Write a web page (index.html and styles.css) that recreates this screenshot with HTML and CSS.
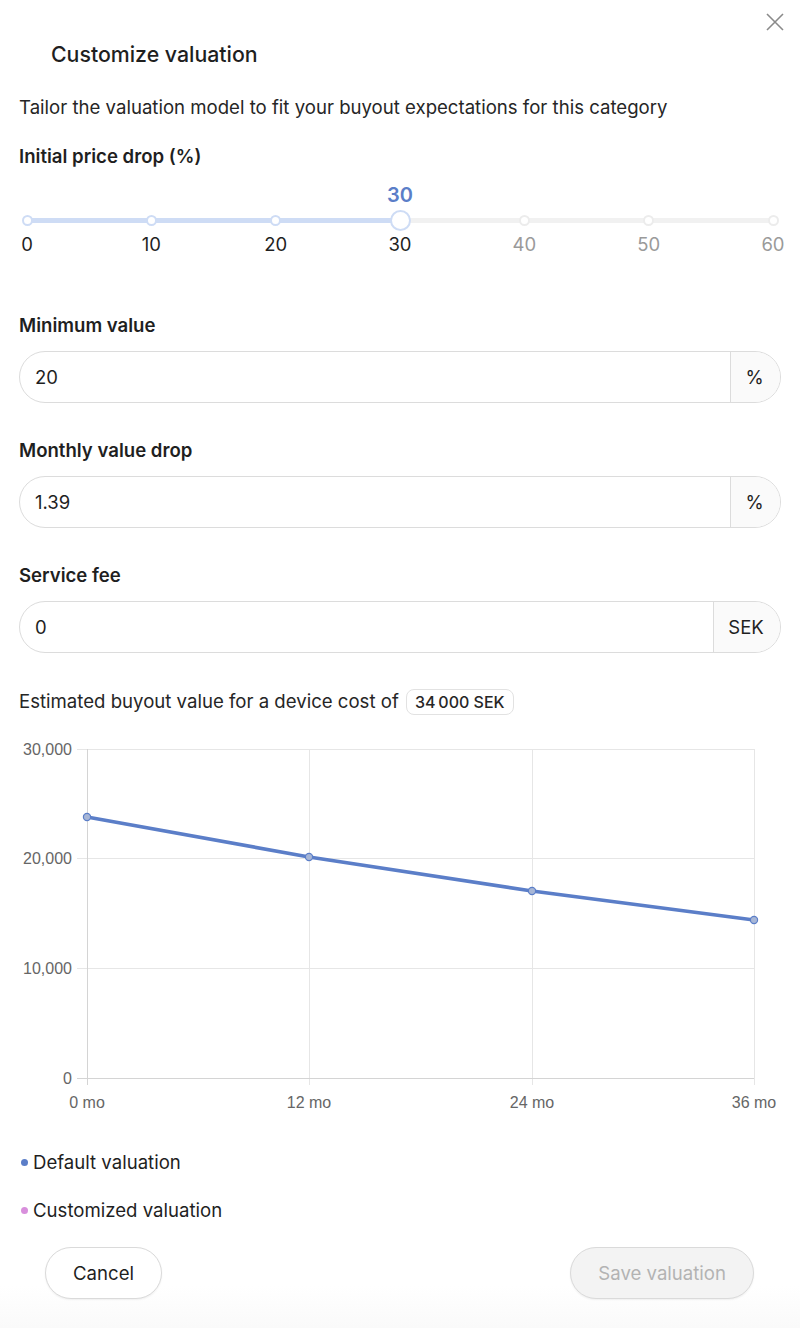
FILE: index.html
```html
<!DOCTYPE html>
<html>
<head>
<meta charset="utf-8">
<link rel="stylesheet" href="styles.css">
</head>
<body>
<div class="modal">
  <button class="close" aria-label="Close">
    <svg width="18" height="18" viewBox="0 0 18 18"><path d="M1 1L17 17M17 1L1 17" stroke="#8a8a8a" stroke-width="1.6" fill="none"/></svg>
  </button>
  <h2 class="title">Customize valuation</h2>
  <p class="desc">Tailor the valuation model to fit your buyout expectations for this category</p>

  <div class="field slider-field">
    <div class="label">Initial price drop (%)</div>
    <div class="slider">
      <div class="slider-value">30</div>
      <div class="track">
        <div class="track-fill"></div>
        <span class="dot active" style="left:0%"></span>
        <span class="dot active" style="left:16.6667%"></span>
        <span class="dot active" style="left:33.3333%"></span>
        <span class="thumb" style="left:50%"></span>
        <span class="dot" style="left:66.6667%"></span>
        <span class="dot" style="left:83.3333%"></span>
        <span class="dot" style="left:100%"></span>
      </div>
      <div class="ticks">
        <span class="tick on">0</span>
        <span class="tick on">10</span>
        <span class="tick on">20</span>
        <span class="tick on">30</span>
        <span class="tick">40</span>
        <span class="tick">50</span>
        <span class="tick">60</span>
      </div>
    </div>
  </div>

  <div class="field first-input">
    <div class="label">Minimum value</div>
    <div class="input">
      <span class="input-value">20</span>
      <span class="suffix">%</span>
    </div>
  </div>

  <div class="field">
    <div class="label">Monthly value drop</div>
    <div class="input">
      <span class="input-value">1.39</span>
      <span class="suffix">%</span>
    </div>
  </div>

  <div class="field">
    <div class="label">Service fee</div>
    <div class="input">
      <span class="input-value">0</span>
      <span class="suffix wide">SEK</span>
    </div>
  </div>

  <div class="estimate">Estimated buyout value for a device cost of <span class="badge">34&#8239;000 SEK</span></div>

  <svg class="chart" width="762" height="385" viewBox="0 0 762 385">
    <g stroke="#e6e6e6" stroke-width="1">
      <line x1="58" y1="14.5" x2="735" y2="14.5"/>
      <line x1="58" y1="123.5" x2="735" y2="123.5"/>
      <line x1="58" y1="233.5" x2="735" y2="233.5"/>
      <line x1="290.5" y1="14" x2="290.5" y2="350"/>
      <line x1="513.5" y1="14" x2="513.5" y2="350"/>
      <line x1="735.5" y1="14" x2="735.5" y2="350"/>
    </g>
    <g stroke="#d4d4d4" stroke-width="1">
      <line x1="58" y1="343.5" x2="735" y2="343.5"/>
      <line x1="68.5" y1="14" x2="68.5" y2="350"/>
    </g>
    <g class="axis" font-family="'Liberation Sans', Arial, sans-serif" font-size="16" fill="#666">
      <text x="53" y="20" text-anchor="end">30,000</text>
      <text x="53" y="129" text-anchor="end">20,000</text>
      <text x="53" y="239" text-anchor="end">10,000</text>
      <text x="53" y="349" text-anchor="end">0</text>
      <text x="68" y="373" text-anchor="middle">0 mo</text>
      <text x="290" y="373" text-anchor="middle">12 mo</text>
      <text x="513" y="373" text-anchor="middle">24 mo</text>
      <text x="735" y="373" text-anchor="middle">36 mo</text>
    </g>
    <polyline points="68,82 290,122 513,156 735,185" fill="none" stroke="#5b7ec8" stroke-width="3.6" stroke-linejoin="round"/>
    <g fill="#a7b6d6" stroke="#5b7ec8" stroke-width="1.2">
      <circle cx="68" cy="82" r="3.6"/>
      <circle cx="290" cy="122" r="3.6"/>
      <circle cx="513" cy="156" r="3.6"/>
      <circle cx="735" cy="185" r="3.6"/>
    </g>
  </svg>

  <div class="legend">
    <div class="legend-item"><span class="ldot blue"></span>Default valuation</div>
    <div class="legend-item"><span class="ldot pink"></span>Customized valuation</div>
  </div>
</div>
<div class="footer">
  <button class="btn">Cancel</button>
  <button class="btn disabled">Save valuation</button>
</div>
</body>
</html>
```

FILE: styles.css
```css
html, body {
  margin: 0;
  padding: 0;
  background: #fff;
}
body {
  font-family: Inter, "Noto Sans", sans-serif;
  color: #1f1f1f;
  width: 800px;
  height: 1328px;
  overflow: hidden;
  display: flex;
  flex-direction: column;
}
.modal {
  position: relative;
  padding: 0 19px;
  flex: 1;
}
.close {
  position: absolute;
  top: 13px;
  right: 16px;
  background: none;
  border: none;
  padding: 0;
  width: 18px;
  height: 18px;
  cursor: pointer;
}
.close svg { display: block; }
.title {
  margin: 0;
  padding: 41px 0 0 32px;
  font-size: 21.3px;
  font-weight: 500;
  line-height: 26px;
  color: #1f1f1f;
}
.desc {
  margin: 28px 0 0 0;
  font-size: 18.6px;
  line-height: 24px;
  color: #262626;
}
.field { margin-top: 14px; }
.slider-field { margin-top: 25px; }
.label {
  font-size: 18.6px;
  font-weight: 600;
  line-height: 24px;
  color: #1f1f1f;
}
.slider {
  padding: 0 8px;
}
.slider-value {
  text-align: center;
  font-size: 20px;
  font-weight: 600;
  color: #5b7ec8;
  line-height: 24px;
  margin-top: 15px;
}
.track {
  position: relative;
  height: 5px;
  margin-top: 11px;
  background: #f1f1f1;
  border-radius: 3px;
}
.track-fill {
  width: 50%;
  height: 100%;
  background: #cedcf5;
  border-radius: 3px;
}
.dot {
  position: absolute;
  top: 50%;
  width: 7px;
  height: 7px;
  margin: -5.5px 0 0 -5.5px;
  border-radius: 50%;
  background: #fff;
  border: 2px solid #ececec;
}
.dot.active { border-color: #cedcf5; }
.thumb {
  position: absolute;
  top: 50%;
  width: 17px;
  height: 17px;
  margin: -10.5px 0 0 -10.5px;
  border-radius: 50%;
  background: #fff;
  border: 2px solid #cedcf5;
}
.ticks {
  display: flex;
  justify-content: space-between;
  margin: 9px -12px 0;
}
.tick {
  width: 24px;
  text-align: center;
  font-size: 18.5px;
  line-height: 24px;
  color: #9a9a9a;
}
.tick.on { color: #1f1f1f; }
.first-input { margin-top: 57px; }
.field .input { margin-top: 14px; }
.input {
  display: flex;
  height: 50px;
  border: 1px solid #dcdcdc;
  border-radius: 26px;
  overflow: hidden;
  margin-bottom: 35px;
}
.input-value {
  flex: 1;
  padding-left: 15px;
  font-size: 18.5px;
  line-height: 50px;
  color: #1f1f1f;
}
.suffix {
  width: 47px;
  text-align: center;
  padding-right: 2px;
  background: #fafafa;
  border-left: 1px solid #dcdcdc;
  font-size: 18.5px;
  line-height: 50px;
  color: #1f1f1f;
}
.suffix.wide { width: 64px; padding-right: 2px; }
.estimate {
  margin-top: 23px;
  font-size: 18.6px;
  line-height: 26px;
  color: #262626;
}
.badge {
  display: inline-block;
  font-size: 16px;
  font-weight: 500;
  line-height: 22px;
  padding: 1px 8px;
  border: 1px solid #e2e2e2;
  border-radius: 8px;
  margin-left: 2px;
}
.chart {
  display: block;
  margin-top: 20px;
}
.legend {
  margin-top: 30px;
}
.legend-item {
  font-size: 18.6px;
  line-height: 24px;
  color: #1f1f1f;
  display: flex;
  align-items: center;
  margin-bottom: 24px;
}
.ldot {
  width: 7px;
  height: 7px;
  border-radius: 50%;
  margin: 0 5px 0 2px;
}
.ldot.blue { background: #5b7ec8; }
.ldot.pink { background: #d88fdc; }
.footer {
  height: 130px;
  display: flex;
  justify-content: space-between;
  align-items: flex-start;
  padding: 1px 46px 0 45px;
  background: linear-gradient(#fff 0px, #fff 40px, #fafafa 100%);
}
.btn {
  font-family: Inter, "Noto Sans", sans-serif;
  font-size: 18.6px;
  height: 52px;
  padding: 0 27px;
  border-radius: 26px;
  border: 1px solid #dadada;
  background: #fff;
  color: #1f1f1f;
  box-shadow: 0 1px 2px rgba(0,0,0,0.06);
}
.btn.disabled {
  background: #f3f3f3;
  color: #b3b3b3;
  padding: 0 27px;
}
```
